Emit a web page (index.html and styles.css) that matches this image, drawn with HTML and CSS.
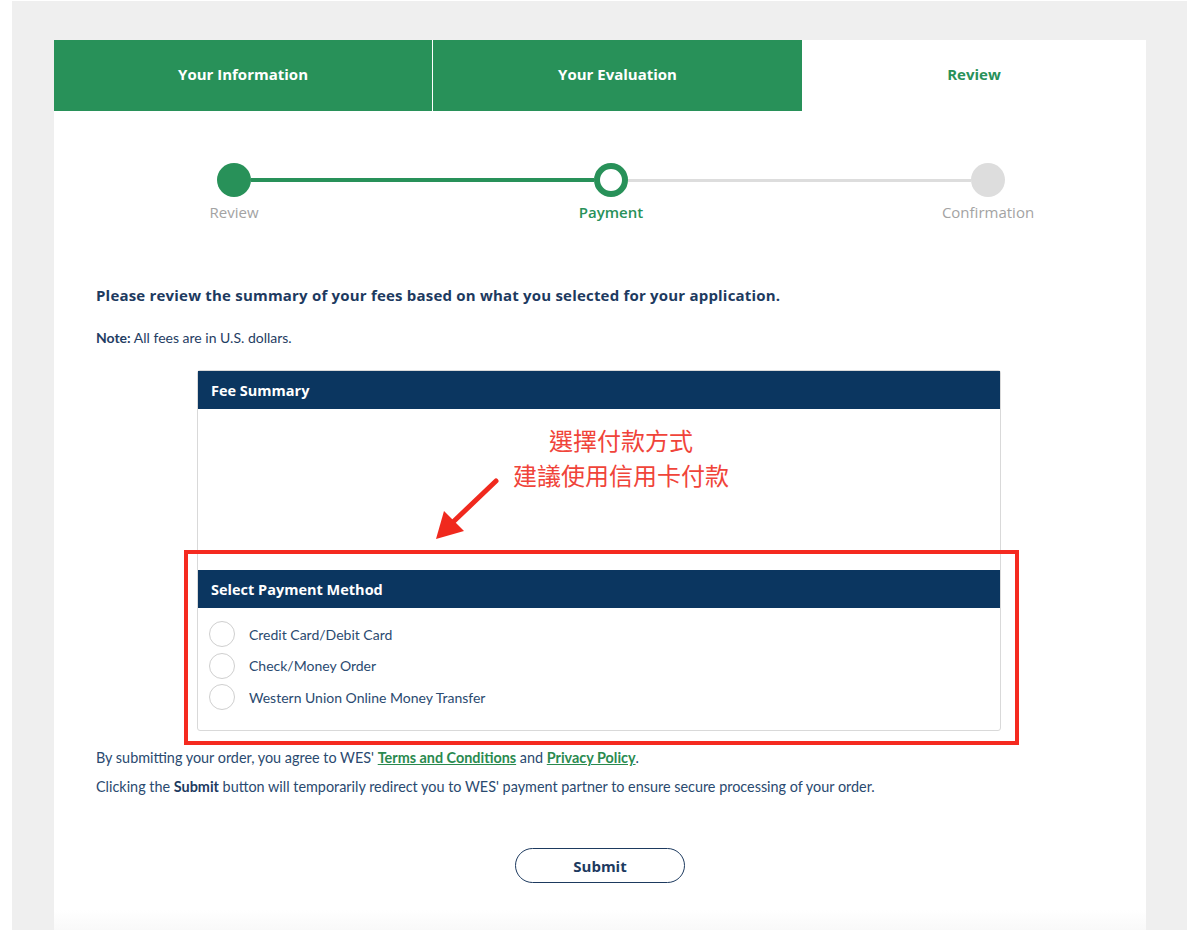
FILE: index.html
```html
<!DOCTYPE html>
<html lang="en">

<head>
    <meta charset="UTF-8">
    <meta name="viewport" content="width=device-width, initial-scale=1.0">
    <title>WES Application - Payment</title>
<link rel="stylesheet" href="styles.css">
</head>

<body>
    <div class="frame">
        <div class="card">

            <!-- top tabs -->
            <div class="tabs">
                <div class="tab done">Your Information</div>
                <div class="tab done">Your Evaluation</div>
                <div class="tab active">Review</div>
            </div>

            <!-- progress steps -->
            <div class="stepper">
                <div class="track">
                    <span class="dot done"></span>
                    <span class="bar done"></span>
                    <span class="dot current"></span>
                    <span class="bar"></span>
                    <span class="dot"></span>
                </div>
                <div class="labels">
                    <div class="label"><span>Review</span></div>
                    <div class="label current"><span>Payment</span></div>
                    <div class="label"><span>Confirmation</span></div>
                </div>
            </div>

            <div class="content">
                <p class="lead">Please review the summary of your fees based on what you selected for your application.</p>
                <p class="note"><b>Note:</b> All fees are in U.S. dollars.</p>

                <div class="fees">
                    <div class="panel-head">Fee Summary</div>
                    <div class="fee-body"></div>

                    <div class="panel-head">Select Payment Method</div>
                    <div class="methods">
                        <label class="method"><span class="radio"></span>Credit Card/Debit Card</label>
                        <label class="method"><span class="radio"></span>Check/Money Order</label>
                        <label class="method"><span class="radio"></span>Western Union Online Money Transfer</label>
                    </div>

                    <!-- annotation -->
                    <div class="hint">
                        <div>選擇付款方式</div>
                        <div>建議使用信用卡付款</div>
                    </div>
                    <svg class="arrow" width="80" height="80" viewBox="0 0 80 80">
                        <line x1="70" y1="8" x2="26" y2="50" stroke="#f0291e" stroke-width="5" stroke-linecap="round" />
                        <polygon points="10,66 18,38 38,58" fill="#f0291e" />
                    </svg>
                    <div class="highlight"></div>
                </div>

                <p class="terms">By submitting your order, you agree to WES' <a href="#">Terms and Conditions</a> and <a href="#">Privacy Policy</a>.</p>
                <p class="terms">Clicking the <b>Submit</b> button will temporarily redirect you to WES' payment partner to ensure secure processing of your order.</p>

                <div class="actions">
                    <button class="submit">Submit</button>
                </div>
            </div>
        </div>
    </div>
</body>

</html>
```

FILE: styles.css
```css
*{
    margin: 0;
    padding: 0;
    box-sizing: border-box;
}
body{
    background-color: #fff;
    height: 930px;
    overflow: hidden;
    font-family: Lato, "Open Sans", sans-serif;
    color: #1f3d63;
}
.frame{
    margin-left: 12px;
    width: 1175px;
    height: 930px;
    margin-top: 1px;
    padding: 39px 0 0 42px;
    background-color: #efefef;
}
.card{
    width: 1092px;
    height: 900px;
    background: linear-gradient(#fff 870px, #f6f6f6);
}

/* tabs */
.tabs{
    display: grid;
    grid-template-columns: 378px 370px 344px;
    height: 71px;
}
.tab{
    display: flex;
    align-items: center;
    justify-content: center;
    font-family: "Open Sans", sans-serif;
    font-weight: 700;
    font-size: 15px;
    padding-bottom: 4px;
}
.tab.done{
    background-color: #289159;
    color: #fff;
}
.tab.done + .tab.done{
    border-left: 1px solid #fff;
}
.tab.active{
    color: #289159;
}

/* steps */
.stepper{
    margin: 52px 0 0 163px;
    width: 788px;
}
.track{
    display: flex;
    align-items: center;
}
.dot{
    width: 34px;
    height: 34px;
    border-radius: 50%;
    background-color: #ddd;
    flex-shrink: 0;
}
.dot.done{
    background-color: #289159;
}
.dot.current{
    background-color: #fff;
    border: 6px solid #289159;
}
.bar{
    flex: 1;
    height: 3px;
    background-color: #ddd;
}
.bar.done{
    height: 4px;
    background-color: #289159;
}
.labels{
    display: flex;
    justify-content: space-between;
    margin-top: 5px;
}
.label{
    width: 34px;
    display: flex;
    justify-content: center;
    white-space: nowrap;
    font-family: "Open Sans", sans-serif;
    font-size: 15px;
    color: #a3a3a3;
}
.label.current{
    color: #289159;
    font-weight: 600;
}

/* main text */
.content{
    padding: 0 42px;
}
.lead{
    margin-top: 63px;
    font-family: "Open Sans", sans-serif;
    font-weight: 700;
    font-size: 15px;
    letter-spacing: 0.2px;
    color: #1d3a5f;
}
.note{
    margin-top: 24px;
    font-size: 14px;
}
.note b{
    font-weight: 700;
}

/* fee card */
.fees{
    position: relative;
    margin: 24px 0 0 101px;
    width: 804px;
    border: 1px solid #d9d9d9;
    border-radius: 3px;
}
.panel-head{
    background-color: #0b3660;
    color: #fff;
    font-family: "Open Sans", sans-serif;
    font-weight: 700;
    font-size: 14.5px;
    height: 38px;
    display: flex;
    align-items: center;
    padding-left: 13px;
}
.fee-body{
    height: 161px;
}
.methods{
    display: flex;
    flex-direction: column;
    gap: 5.5px;
    padding: 13px 0 20px 11px;
}
.method{
    display: flex;
    align-items: center;
    gap: 14px;
    font-size: 14px;
    color: #2a4a70;
}
.radio{
    width: 26px;
    height: 26px;
    border-radius: 50%;
    border: 1px solid #cfcfcf;
    background-color: #fff;
}

/* red note on top of the card */
.hint{
    position: absolute;
    top: 51px;
    left: 298px;
    width: 250px;
    text-align: center;
    font-family: "Noto Sans CJK TC", sans-serif;
    font-size: 24px;
    line-height: 35px;
    color: #f0443a;
}
.arrow{
    position: absolute;
    top: 102px;
    left: 228px;
}
.highlight{
    position: absolute;
    top: 179px;
    left: -14px;
    width: 835px;
    height: 195px;
    border: 4px solid #f52a20;
}

/* footer */
.terms{
    font-size: 14.4px;
    margin-top: 12px;
    color: #2a4a70;
}
.fees + .terms{
    margin-top: 18px;
}
.terms b{
    color: #1d3a5f;
}
.terms a{
    color: #2a8a4f;
    font-weight: 700;
}
.actions{
    display: flex;
    justify-content: center;
    margin-top: 53px;
}
.submit{
    width: 170px;
    height: 35px;
    border: 1px solid #1d3a5f;
    border-radius: 18px;
    background-color: #fff;
    color: #1d3a5f;
    font-family: "Open Sans", sans-serif;
    font-weight: 700;
    font-size: 15px;
}
```
